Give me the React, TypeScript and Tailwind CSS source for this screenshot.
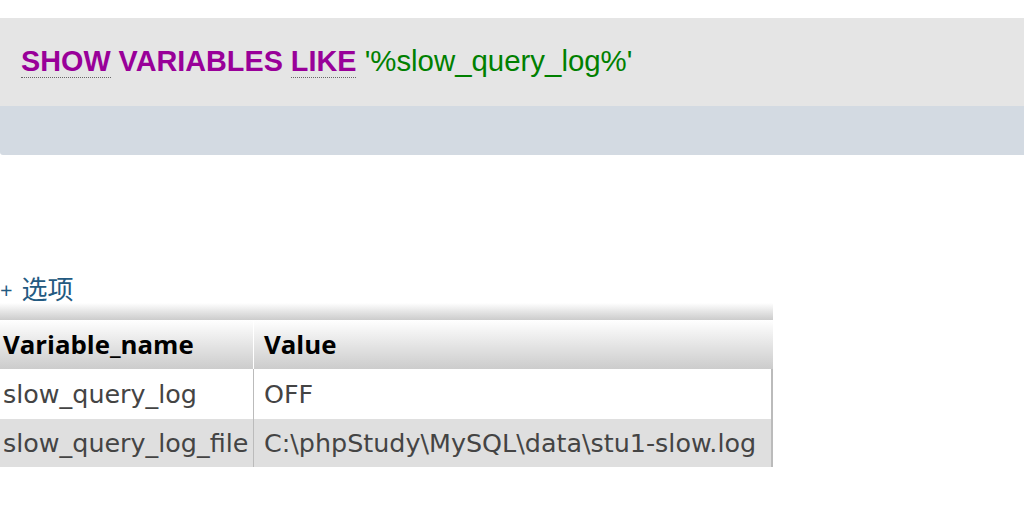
import React from "react";

const rows = [
  { name: "slow_query_log", value: "OFF" },
  { name: "slow_query_log_file", value: "C:\\phpStudy\\MySQL\\data\\stu1-slow.log" },
];

export default function App() {
  return (
    <div className="w-[1024px] h-[506px] bg-white overflow-hidden">
      {/* SQL 查询框 */}
      <div className="mt-[18px] rounded-bl-[3px] overflow-hidden">
        <div className="h-[88px] bg-[#e5e5e5] flex items-center pl-[21px] pb-[2px]">
          <code className="text-[29.4px] leading-none whitespace-pre font-['Liberation_Sans',Arial,sans-serif]">
            <span className="font-bold text-[28.8px] text-[#990099] border-b border-dotted border-[#666]">SHOW</span>
            <span className="font-bold text-[28.8px] text-[#990099]"> VARIABLES </span>
            <span className="font-bold text-[28.8px] text-[#990099] border-b border-dotted border-[#666]">LIKE</span>
            <span className="text-[#008000]"> '%slow_query_log%'</span>
          </code>
        </div>
        <div className="h-[49px] bg-[#d3dae2]" />
      </div>

      {/* 选项 */}
      <div className="mt-[121px] h-[26px] text-[#235a81] font-['Open_Sans','Noto_Sans_CJK_SC',sans-serif] flex items-center">
        <span className="text-[22px] leading-none">+</span>
        <span className="text-[26px] leading-none ml-[9px]">选项</span>
      </div>

      {/* 结果表 */}
      <div className="mt-[1px] w-[773px] font-['DejaVu_Sans','Noto_Sans_CJK_SC',sans-serif] text-[25.4px]">
        <div className="h-[17px] bg-gradient-to-b from-white to-[#cccccc]" />
        <div className="flex h-[49px] bg-gradient-to-b from-white to-[#cccccc] font-bold text-black text-[25.8px] font-['Open_Sans',sans-serif]">
          <div className="w-[254px] border-r border-white flex items-center pl-[3px]">Variable_name</div>
          <div className="flex-1 flex items-center pl-[10px]">Value</div>
        </div>
        {rows.map((r, i) => (
          <div
            key={r.name}
            className={`flex ${i === 0 ? "h-[50px] bg-white" : "h-[48px] bg-[#dfdfdf]"} text-[#444] border-r-2 border-[#bbbbbb]`}
          >
            <div className="w-[254px] border-r border-[#bbbbbb] flex items-center pl-[3px] whitespace-nowrap">{r.name}</div>
            <div className="flex-1 flex items-center pl-[10px] whitespace-nowrap">{r.value}</div>
          </div>
        ))}
      </div>
    </div>
  );
}
